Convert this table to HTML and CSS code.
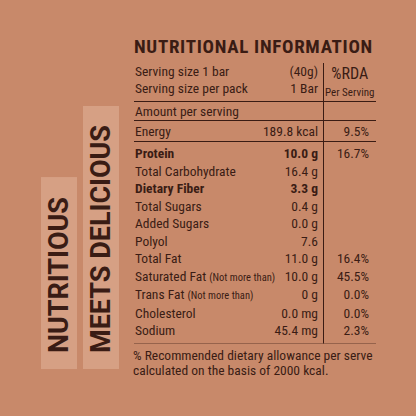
FILE: index.html
```html
<!DOCTYPE html>
<html>
	<head>
		<meta charset="utf-8"/>
		<meta name="viewport" content="width=device-width"/>
		<link rel="stylesheet" href="styles.css">
	</head>
	<body>
		<div class="panel">
			<div class="tags">
				<div class="tag one">NUTRITIOUS</div>
				<div class="tag two">MEETS DELICIOUS</div>
			</div>
			<div class="facts">
				<h1 class="title">NUTRITIONAL INFORMATION</h1>
				<div class="grid">
					<div class="row top">
						<div class="lab">Serving size 1 bar</div>
						<div class="val">(40g)</div>
						<div class="pct head"><div class="rda">%RDA</div><div class="per">Per Serving</div></div>
					</div>
					<div class="row top2">
						<div class="lab">Serving size per pack</div>
						<div class="val">1 Bar</div>
					</div>
					<div class="row amt">
						<div class="lab">Amount per serving</div>
						<div class="val"></div>
						<div class="pct"></div>
					</div>
					<div class="row en">
						<div class="lab">Energy</div>
						<div class="val">189.8 kcal</div>
						<div class="pct">9.5%</div>
					</div>
					<div class="row n first b">
						<div class="lab">Protein</div>
						<div class="val">10.0 g</div>
						<div class="pct">16.7%</div>
					</div>
					<div class="row n">
						<div class="lab">Total Carbohydrate</div>
						<div class="val">16.4 g</div>
						<div class="pct"></div>
					</div>
					<div class="row n b">
						<div class="lab">Dietary Fiber</div>
						<div class="val">3.3 g</div>
						<div class="pct"></div>
					</div>
					<div class="row n">
						<div class="lab">Total Sugars</div>
						<div class="val">0.4 g</div>
						<div class="pct"></div>
					</div>
					<div class="row n">
						<div class="lab">Added Sugars</div>
						<div class="val">0.0 g</div>
						<div class="pct"></div>
					</div>
					<div class="row n">
						<div class="lab">Polyol</div>
						<div class="val">7.6</div>
						<div class="pct"></div>
					</div>
					<div class="row n">
						<div class="lab">Total Fat</div>
						<div class="val">11.0 g</div>
						<div class="pct">16.4%</div>
					</div>
					<div class="row n">
						<div class="lab">Saturated Fat <small>(Not more than)</small></div>
						<div class="val">10.0 g</div>
						<div class="pct">45.5%</div>
					</div>
					<div class="row n">
						<div class="lab">Trans Fat <small>(Not more than)</small></div>
						<div class="val">0 g</div>
						<div class="pct">0.0%</div>
					</div>
					<div class="row n">
						<div class="lab">Cholesterol</div>
						<div class="val">0.0 mg</div>
						<div class="pct">0.0%</div>
					</div>
					<div class="row n last">
						<div class="lab">Sodium</div>
						<div class="val">45.4 mg</div>
						<div class="pct">2.3%</div>
					</div>
				</div>
				<p class="note">% Recommended dietary allowance per serve<br>calculated on the basis of 2000 kcal.</p>
			</div>
		</div>
	</body>
</html>
```

FILE: styles.css
```css
body{
	margin:0;
	background-color:#c8896a;
	color:#3a1c14;
	font-family:Roboto,"Liberation Sans",sans-serif;
}
.panel{
	display:flex;
	height:416px;
}

/* rotated slogan */
.tags{
	display:flex;
	align-items:flex-end;
	gap:6px;
	height:369px;
	padding-left:41px;
}
.tag{
	writing-mode:vertical-rl;
	transform:rotate(180deg);
	background-color:#d6a084;
	font-size:27px;
	font-weight:bold;
	line-height:36px;
	white-space:nowrap;
}
.one{
	padding:16px 0 20px;
}
.two{
	padding:16px 0 19px;
}

/* nutrition table */
.facts{
	margin-left:15px;
	padding-top:36px;
	width:242px;
	font-stretch:87%;
}
.title{
	margin:0 0 5px;
	font-size:19px;
	line-height:22px;
	font-weight:bold;
	letter-spacing:0.7px;
}
.grid{
	display:grid;
	grid-template-columns:minmax(0,1fr) auto 53.5px;
	font-size:13.5px;
	line-height:17px;
}
.row{
	display:contents;
}
.lab{
	padding-left:1px;
	white-space:nowrap;
}
.lab small{
	font-size:10.5px;
}
.val{
	text-align:right;
	padding-right:4.5px;
	white-space:nowrap;
}
.pct{
	box-sizing:border-box;
	border-left:1.5px solid #3a1c14;
	text-align:right;
	padding-right:7px;
}
.head{
	grid-row:span 2;
	text-align:center;
	padding:2px 0 0;
	border-bottom:1px solid #3a1c14;
}
.rda{
	font-size:16px;
	line-height:17px;
}
.per{
	margin-top:4px;
	font-size:11px;
	line-height:13px;
}
.top2 > div{
	padding-bottom:4px;
	border-bottom:1px solid #3a1c14;
}
.amt > div{
	padding-top:1px;
	border-bottom:1px solid #3a1c14;
}
.en > div{
	padding-top:2px;
	padding-bottom:1px;
	border-bottom:1px solid #3a1c14;
}
.n > div{
	line-height:17.5px;
}
.first > div{
	padding-top:3px;
}
.last > div{
	padding-bottom:3px;
	border-bottom:1px solid rgba(58,28,20,0.35);
}
.b .lab,.b .val{
	font-weight:bold;
}
.note{
	margin:4px 0 0 -1px;
	font-size:13.5px;
	line-height:15px;
}
```
